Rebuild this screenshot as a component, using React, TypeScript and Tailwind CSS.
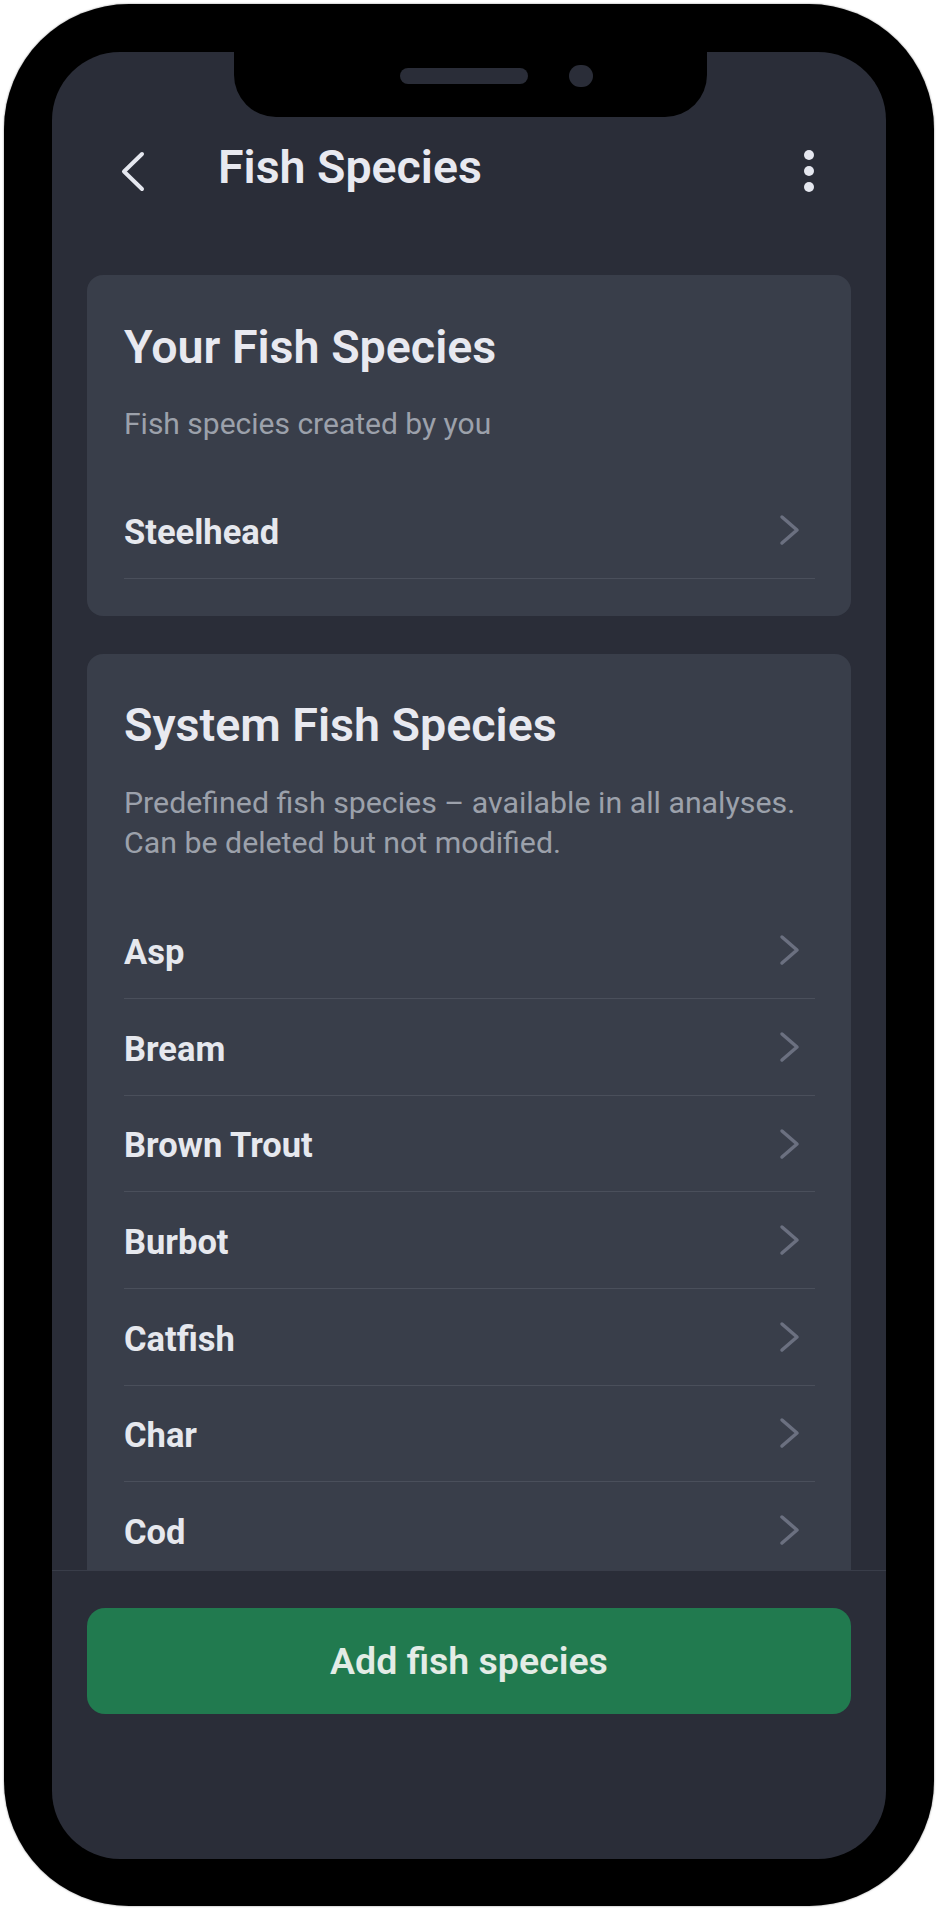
import React from "react";

const userSpecies = ["Steelhead"];

const systemSpecies = ["Asp", "Bream", "Brown Trout", "Burbot", "Catfish", "Char", "Cod"];

const ChevronRight = () => (
  <svg width="22" height="32" viewBox="0 0 22 32" fill="none" className="shrink-0">
    <path
      d="M3 3 L18 16 L3 29"
      stroke="#6b7080"
      strokeWidth="3.5"
      strokeLinecap="round"
      strokeLinejoin="round"
    />
  </svg>
);

const SpeciesRow = ({ name }: { name: string }) => (
  <div className="flex h-[96.6px] items-center justify-between border-b border-[#4a4f5b] pr-[14px]">
    <span className="pt-[4px] text-[34.5px] font-bold leading-none text-[#e6e8ee]">{name}</span>
    <ChevronRight />
  </div>
);

const Card = ({
  title,
  children,
  className,
}: {
  title: string;
  children: React.ReactNode;
  className?: string;
}) => (
  <section className={`rounded-2xl bg-[#393e4a] pl-[37px] pr-[36px] ${className ?? ""}`}>
    <h2 className="text-[46.6px] font-semibold leading-[54px] text-[#e8e9f0]">{title}</h2>
    {children}
  </section>
);

export default function App() {
  return (
    <div
      className="min-h-screen bg-white p-[4px]"
      style={{ fontFamily: "Roboto, 'Noto Sans', sans-serif" }}
    >
      <div className="h-[1902px] w-[930px] rounded-[125px] bg-black px-[48px] pb-[47px] pt-[48px] shadow-[0_0_2px_rgba(0,0,0,0.5)]">
        <div className="relative flex h-full flex-col overflow-hidden rounded-[68px] bg-[#2a2d38]">
          {/* notch */}
          <div className="absolute left-[182px] top-0 h-[65px] w-[473px] rounded-b-[42px] bg-black">
            <div className="absolute left-[166px] top-[16px] h-[16px] w-[128px] rounded-full bg-[#2a2d38]" />
            <div className="absolute left-[335px] top-[13px] h-[22px] w-[24px] rounded-full bg-[#2a2d38]" />
          </div>

          {/* header */}
          <header className="mt-[79px] flex h-[80px] shrink-0 items-center pl-[68px] pr-[72px]">
            <svg width="26" height="45" viewBox="0 0 26 45" fill="none">
              <path
                d="M22 5 L4 22.5 L22 40"
                stroke="#e5e7ef"
                strokeWidth="4"
                strokeLinecap="round"
                strokeLinejoin="round"
              />
            </svg>
            <h1 className="mb-2 ml-[72px] text-[46.5px] font-semibold leading-[54px] text-[#e8e9f0]">
              Fish Species
            </h1>
            <div className="ml-auto flex flex-col gap-[6px]">
              <span className="h-[10px] w-[10px] rounded-full bg-[#e5e7ef]" />
              <span className="h-[10px] w-[10px] rounded-full bg-[#e5e7ef]" />
              <span className="h-[10px] w-[10px] rounded-full bg-[#e5e7ef]" />
            </div>
          </header>

          {/* scrolling list */}
          <main className="min-h-0 flex-1 overflow-hidden px-[35px] pt-[64px]">
            <Card title="Your Fish Species" className="pb-[37px] pt-[45px]">
              <p className="mt-[30px] text-[30px] leading-[40px] text-[#9ca1ab]">
                Fish species created by you
              </p>
              <div className="mt-[38px]">
                {userSpecies.map((s) => (
                  <SpeciesRow key={s} name={s} />
                ))}
              </div>
            </Card>

            <Card title="System Fish Species" className="mt-[38px] pb-[37px] pt-[44px]">
              <p className="mt-[31px] whitespace-nowrap text-[30.3px] leading-[40px] text-[#9ca1ab]">
                Predefined fish species – available in all analyses.
                <br />
                Can be deleted but not modified.
              </p>
              <div className="mt-[40px]">
                {systemSpecies.map((s) => (
                  <SpeciesRow key={s} name={s} />
                ))}
              </div>
            </Card>
          </main>

          {/* bottom action */}
          <footer className="h-[289px] shrink-0 border-t border-[#393d49] px-[35px] pt-[37px]">
            <button className="flex h-[106px] w-full items-center justify-center rounded-[18px] bg-[#217a4f] text-[37.5px] font-semibold text-[#e3ece6]">
              Add fish species
            </button>
          </footer>
        </div>
      </div>
    </div>
  );
}
